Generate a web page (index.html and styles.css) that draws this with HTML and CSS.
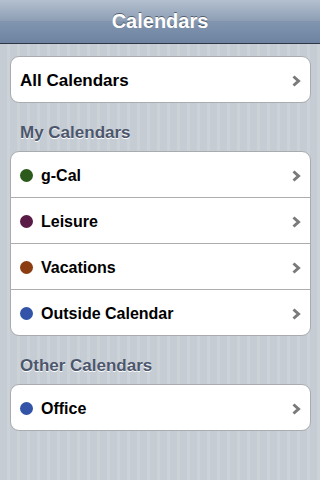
FILE: index.html
```html
<!DOCTYPE html>
<html>
<head>
<meta charset="utf-8">
<link rel="stylesheet" href="styles.css">
</head>
<body>
<div class="navbar"><span class="title">Calendars</span></div>
<div class="content">
  <div class="group first">
    <div class="row"><span class="label">All Calendars</span><svg class="chev" viewBox="0 0 9 12"><path d="M1.5 1.5 L6.5 6 L1.5 10.5" /></svg></div>
  </div>
  <div class="section">My Calendars</div>
  <div class="group">
    <div class="row"><span class="dot green"></span><span class="label small">g-Cal</span><svg class="chev" viewBox="0 0 9 12"><path d="M1.5 1.5 L6.5 6 L1.5 10.5" /></svg></div>
    <div class="row"><span class="dot purple"></span><span class="label small">Leisure</span><svg class="chev" viewBox="0 0 9 12"><path d="M1.5 1.5 L6.5 6 L1.5 10.5" /></svg></div>
    <div class="row"><span class="dot brown"></span><span class="label small">Vacations</span><svg class="chev" viewBox="0 0 9 12"><path d="M1.5 1.5 L6.5 6 L1.5 10.5" /></svg></div>
    <div class="row"><span class="dot blue"></span><span class="label small">Outside Calendar</span><svg class="chev" viewBox="0 0 9 12"><path d="M1.5 1.5 L6.5 6 L1.5 10.5" /></svg></div>
  </div>
  <div class="section">Other Calendars</div>
  <div class="group">
    <div class="row"><span class="dot blue"></span><span class="label small">Office</span><svg class="chev" viewBox="0 0 9 12"><path d="M1.5 1.5 L6.5 6 L1.5 10.5" /></svg></div>
  </div>
</div>
</body>
</html>
```
FILE: styles.css
```css
html, body {
  margin: 0;
  padding: 0;
  height: 100%;
}
body {
  font-family: "Liberation Sans", Arial, sans-serif;
  background: repeating-linear-gradient(90deg, #c5ccd4 0, #c5ccd4 7px, #cbd2d8 7px, #cbd2d8 10px);
  width: 320px;
  height: 480px;
  overflow: hidden;
}
.navbar {
  height: 43px;
  border-bottom: 1px solid #2d3642;
  background: linear-gradient(#b4c0cf 0%, #8c9db4 50%, #8195af 50%, #6d83a1 100%);
  display: flex;
  align-items: center;
  justify-content: center;
}
.title {
  color: #fff;
  font-weight: bold;
  font-size: 20px;
  text-shadow: 0 -1px 0 rgba(0,0,0,0.45);
}
.content {
  display: flex;
  flex-direction: column;
  padding: 12px 9px 0 10px;
}
.group {
  background: #fff;
  border: 1px solid #a9abae;
  border-radius: 9px;
  overflow: hidden;
}
.row {
  height: 45px;
  box-sizing: border-box;
  display: flex;
  align-items: center;
  padding: 2px 9px 0 9px;
}
.row + .row {
  border-top: 1px solid #adadad;
  height: 46px;
}
.label {
  flex: 1;
  font-weight: bold;
  font-size: 17px;
  color: #000;
}
.label.small {
  font-size: 16px;
}
.dot {
  width: 13px;
  height: 13px;
  border-radius: 50%;
  margin-right: 8px;
  flex: none;
}
.green { background: #2c5a1c; }
.purple { background: #5a1a46; }
.brown { background: #8b3d11; }
.blue { background: #3253a7; }
.chev {
  width: 9px;
  height: 12px;
  flex: none;
}
.chev path {
  fill: none;
  stroke: #7a7a7a;
  stroke-width: 3;
  stroke-linejoin: miter;
  stroke-linecap: butt;
}
.section {
  padding: 19px 0 8px 10px;
  line-height: 21px;
  font-weight: bold;
  font-size: 17px;
  color: #4c566c;
  text-shadow: 0 1px 0 #fff;
}
```
